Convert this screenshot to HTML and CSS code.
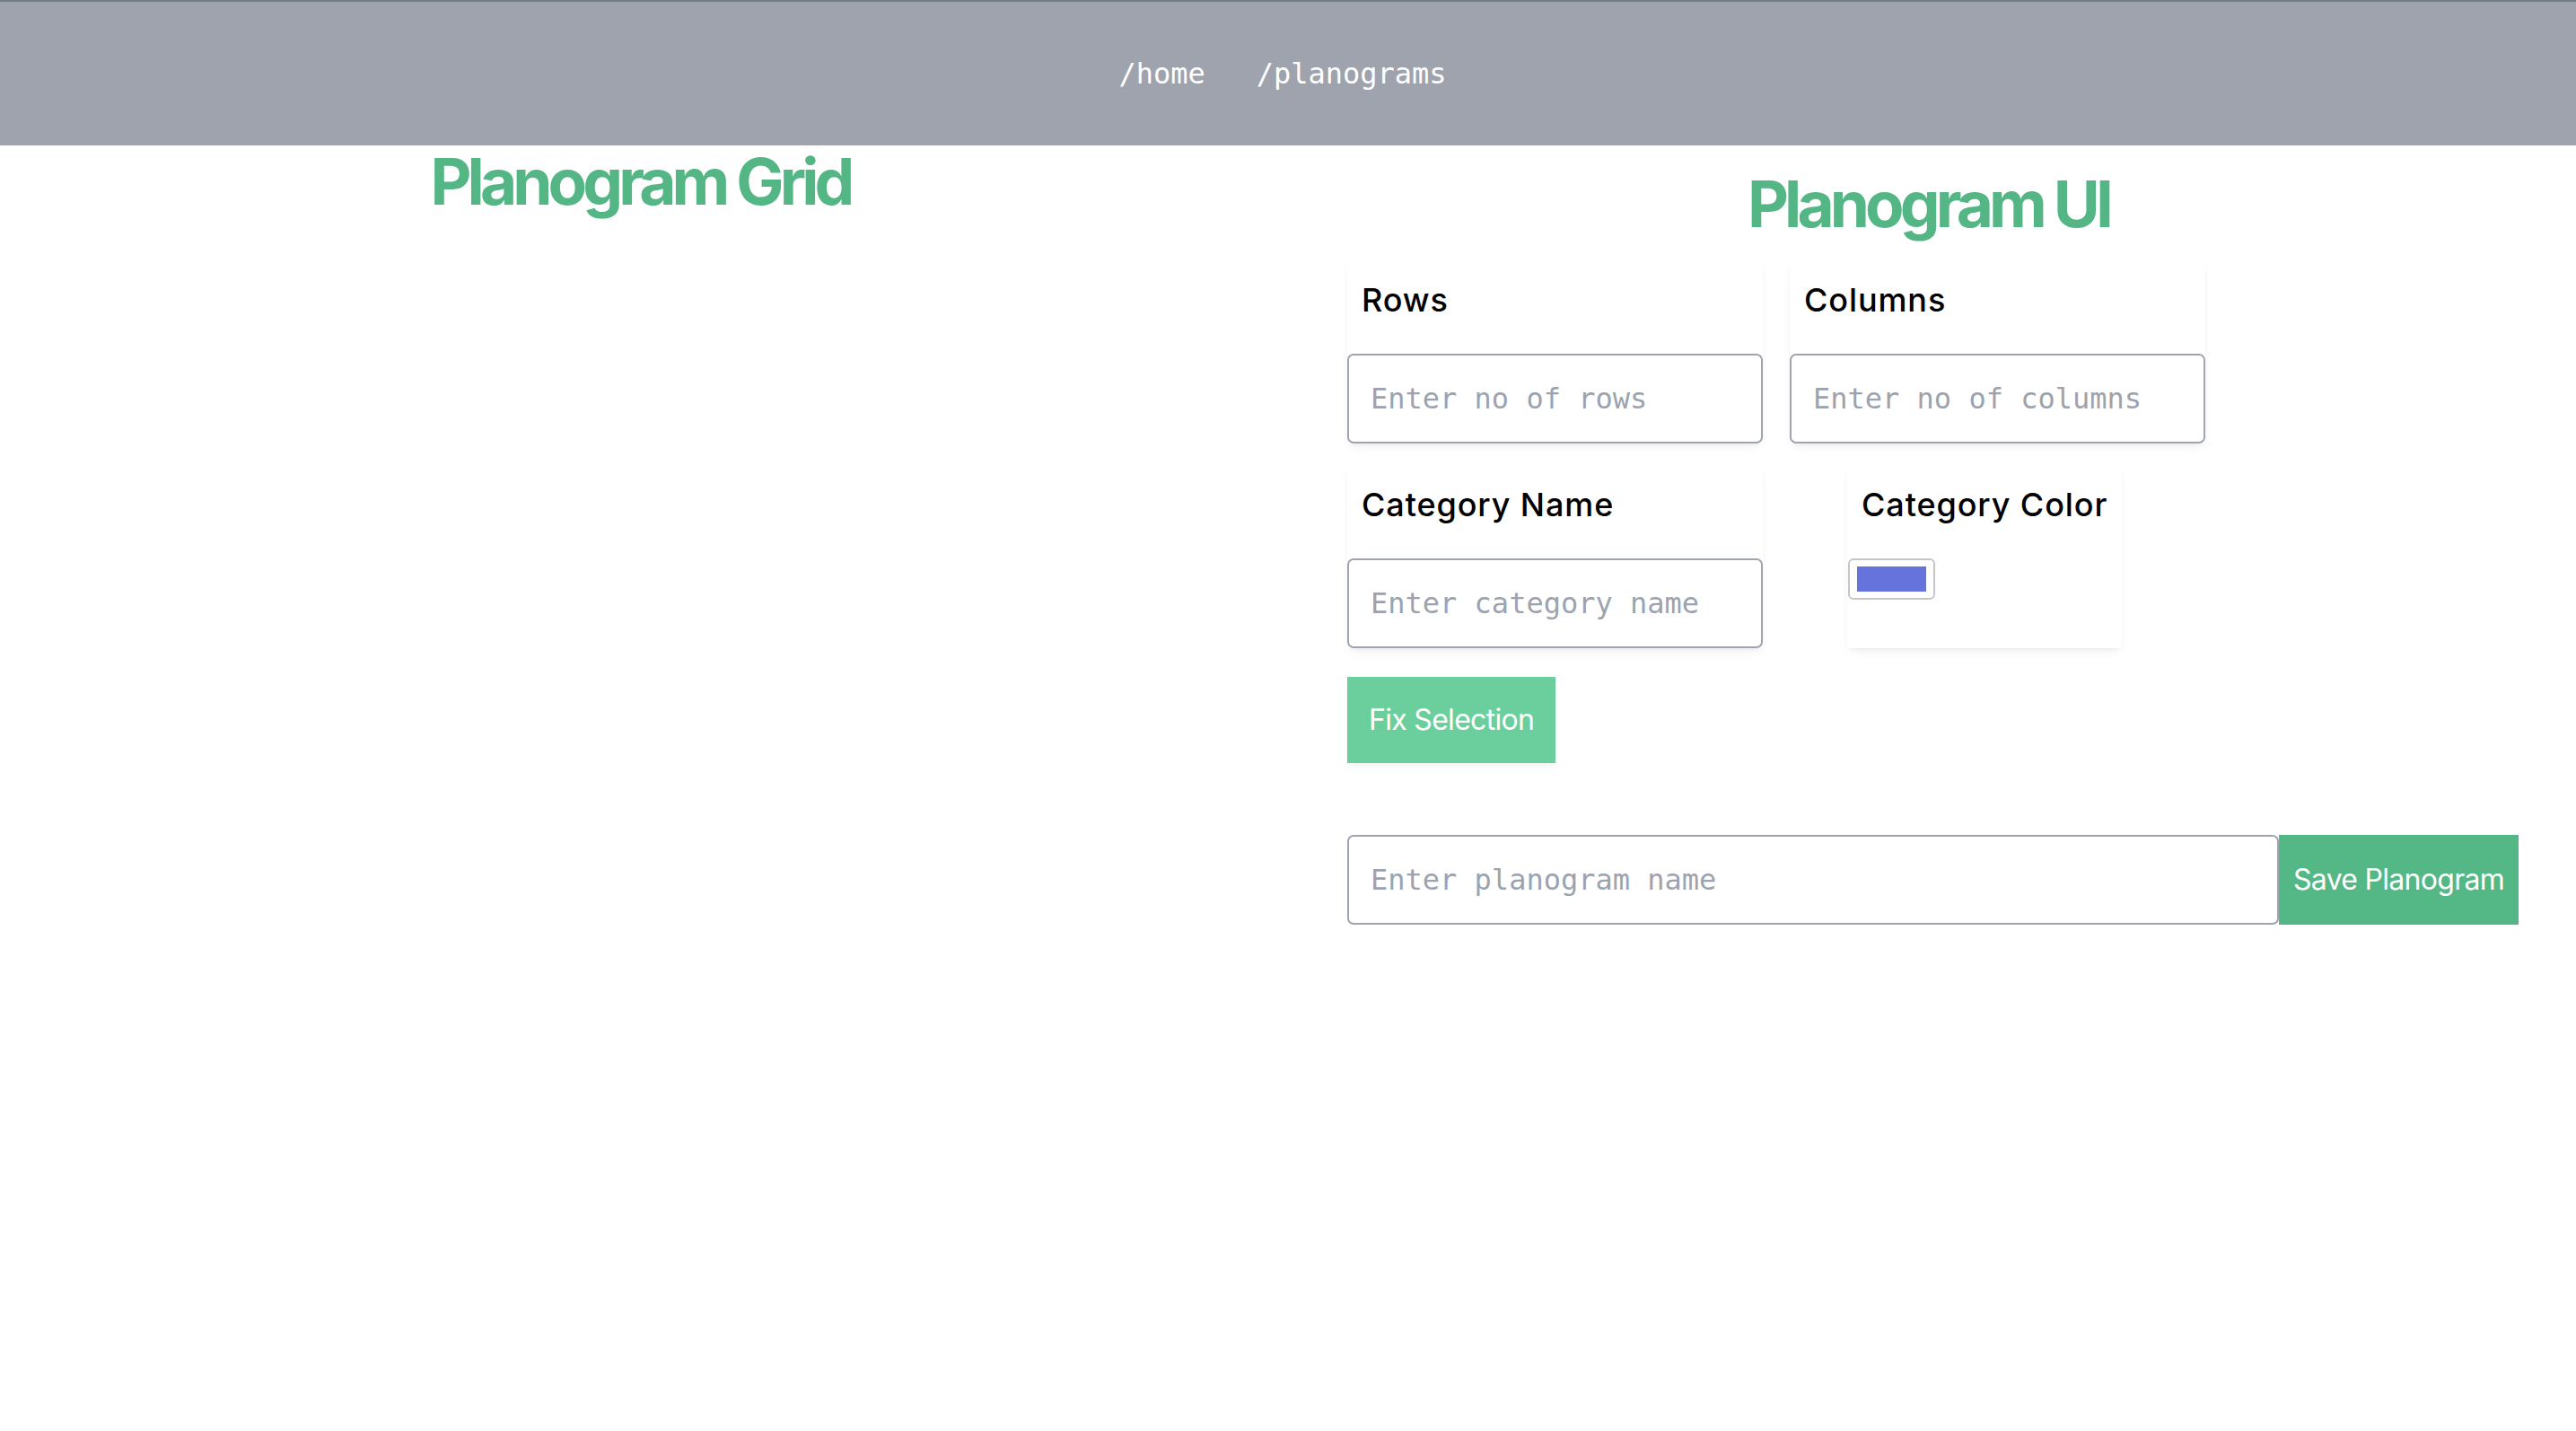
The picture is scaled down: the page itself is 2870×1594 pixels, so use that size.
FILE: index.html
```html
<!DOCTYPE html>
<html lang="en">
<head>
<meta charset="utf-8">
<title>Planogram</title>
<link rel="stylesheet" href="styles.css">
</head>
<body>
<header class="topbar">
  <nav class="nav">
    <a class="nav-link" href="#">/home</a>
    <a class="nav-link" href="#">/planograms</a>
  </nav>
</header>
<main class="layout">
  <section class="grid-col">
    <h1 class="title">Planogram Grid</h1>
  </section>
  <section class="ui-col">
    <h1 class="title title-ui">Planogram UI</h1>
    <div class="form">
      <div class="row">
        <div class="card">
          <label class="label">Rows</label>
          <input class="field" type="text" placeholder="Enter no of rows">
        </div>
        <div class="card">
          <label class="label">Columns</label>
          <input class="field" type="text" placeholder="Enter no of columns">
        </div>
      </div>
      <div class="row row-second">
        <div class="card">
          <label class="label">Category Name</label>
          <input class="field" type="text" placeholder="Enter category name">
        </div>
        <div class="card card-color">
          <label class="label">Category Color</label>
          <input class="color-input" type="color" value="#6673dc">
        </div>
      </div>
      <button class="btn-fix" type="button">Fix Selection</button>
      <div class="save-row">
        <input class="field field-name" type="text" placeholder="Enter planogram name">
        <button class="btn-save" type="button">Save Planogram</button>
      </div>
    </div>
  </section>
</main>
</body>
</html>
```

FILE: styles.css
```css
html, body {
  margin: 0;
  padding: 0;
  background: #ffffff;
}

body {
  font-family: Inter, "Noto Sans", "Liberation Sans", sans-serif;
  color: #000000;
  min-height: 1594px;
}

.topbar {
  height: 160px;
  border-top: 2px solid #717c84;
  background: #9ea3ae;
  display: flex;
  align-items: center;
  justify-content: center;
}

.nav {
  display: flex;
  gap: 57px;
  padding-right: 12px;
}

.nav-link {
  font-family: "DejaVu Sans Mono", "Liberation Mono", monospace;
  font-size: 32px;
  line-height: 48px;
  color: #ffffff;
  text-decoration: none;
}

.layout {
  display: grid;
  grid-template-columns: 1fr 1fr;
}

.title {
  margin: 0;
  padding-right: 8px;
  text-align: center;
  font-size: 71px;
  line-height: 80px;
  font-weight: 700;
  letter-spacing: -4.9px;
  color: #55b685;
}

.title-ui {
  margin-top: 25px;
  margin-bottom: 23px;
}

.form {
  padding-left: 66px;
  display: flex;
  flex-direction: column;
  align-items: flex-start;
}

.row {
  display: flex;
  gap: 30px;
}

.row-second {
  margin-top: 24px;
}

.card {
  width: 463px;
  display: flex;
  flex-direction: column;
  background: #ffffff;
  box-shadow: 0 6px 12px -4px rgba(0, 0, 0, 0.08), 0 2px 6px -2px rgba(0, 0, 0, 0.05);
}

.card-color {
  width: auto;
  margin-left: 64px;
}

.label {
  display: block;
  padding: 16px 16px;
  margin-bottom: 16px;
  font-size: 36px;
  line-height: 56px;
  font-weight: 500;
  letter-spacing: 0.9px;
}

.field {
  box-sizing: border-box;
  width: 100%;
  margin: 0;
  height: 100px;
  padding: 24px;
  border: 2px solid #a0a4b0;
  border-radius: 7px;
  background: #ffffff;
  font-family: "DejaVu Sans Mono", "Liberation Mono", monospace;
  font-size: 32px;
  line-height: 48px;
  color: #1f2937;
  outline: none;
}

.field::placeholder {
  color: #9ca3af;
}

.color-input {
  -webkit-appearance: none;
  appearance: none;
  box-sizing: border-box;
  width: 97px;
  height: 46px;
  margin: 0 0 0 1px;
  padding: 0;
  border: 2px solid #c6c6c9;
  border-radius: 6px;
  background: #ffffff;
  cursor: pointer;
}

.color-input::-webkit-color-swatch-wrapper {
  padding: 7px 8px 7px 8px;
}

.color-input::-webkit-color-swatch {
  border: none;
  border-radius: 0;
}

.btn-fix {
  margin-top: 32px;
  padding: 24px 24px;
  border: none;
  background: #6bcf9d;
  color: #ffffff;
  font-family: Inter, "Noto Sans", "Liberation Sans", sans-serif;
  font-size: 32px;
  line-height: 48px;
  font-weight: 400;
  letter-spacing: -0.7px;
  box-shadow: 0 4px 8px -2px rgba(0, 0, 0, 0.08);
  cursor: pointer;
}

.save-row {
  margin-top: 80px;
  display: flex;
  align-items: stretch;
}

.field-name {
  width: 1038px;
}

.btn-save {
  height: 100px;
  padding: 0 16px;
  border: none;
  background: #54b786;
  color: #ffffff;
  font-family: Inter, "Noto Sans", "Liberation Sans", sans-serif;
  font-size: 32px;
  line-height: 48px;
  font-weight: 400;
  letter-spacing: -0.7px;
  cursor: pointer;
}
```
